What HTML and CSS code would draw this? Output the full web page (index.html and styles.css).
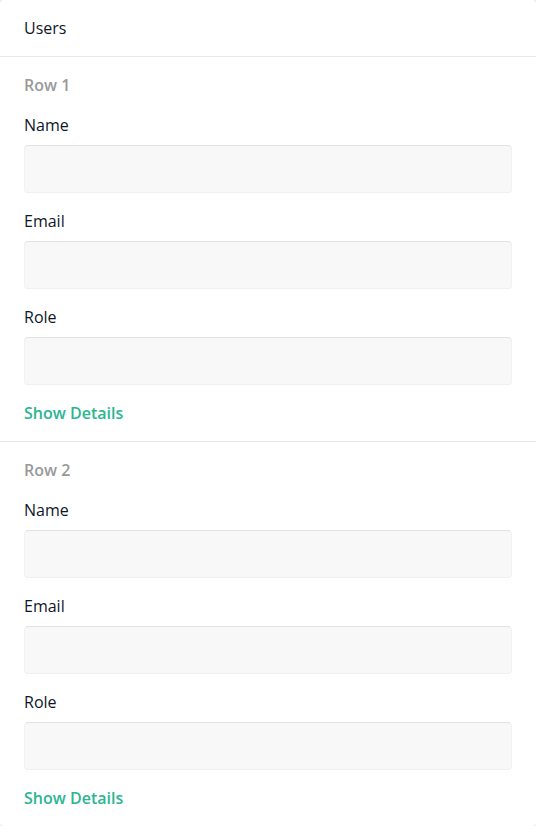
FILE: index.html
```html
<!DOCTYPE html>
<html lang="en">
<head>
<meta charset="utf-8">
<title>Users</title>
<link rel="stylesheet" href="styles.css">
</head>
<body>
<div class="card">
  <div class="card-header">Users</div>
  <section class="row">
    <div class="row-title">Row 1</div>
    <div class="fields">
      <div class="field">
        <label class="label">Name</label>
        <div class="input"></div>
      </div>
      <div class="field">
        <label class="label">Email</label>
        <div class="input"></div>
      </div>
      <div class="field">
        <label class="label">Role</label>
        <div class="input"></div>
      </div>
    </div>
    <a class="link">Show Details</a>
  </section>
  <section class="row">
    <div class="row-title">Row 2</div>
    <div class="fields">
      <div class="field">
        <label class="label">Name</label>
        <div class="input"></div>
      </div>
      <div class="field">
        <label class="label">Email</label>
        <div class="input"></div>
      </div>
      <div class="field">
        <label class="label">Role</label>
        <div class="input"></div>
      </div>
    </div>
    <a class="link">Show Details</a>
  </section>
</div>
</body>
</html>
```
FILE: styles.css
```css
* { box-sizing: border-box; }
html, body {
  margin: 0;
  padding: 0;
  background: #f4f4f4;
}
body {
  font-family: "Open Sans", "Noto Sans", sans-serif;
  font-size: 16px;
  line-height: 24px;
  color: #0f1629;
}
.card {
  background: #fff;
  height: 826px;
  border-radius: 4px;
  box-shadow: 0 0 2px rgba(0, 0, 0, 0.12);
  overflow: hidden;
}
.card-header {
  height: 57px;
  padding: 16px 24px;
  font-weight: 500;
  border-bottom: 1px solid #e8e8e8;
}
.row {
  padding: 16px 24px;
  display: flex;
  flex-direction: column;
  gap: 16px;
  border-bottom: 1px solid #e8e8e8;
}
.row:last-child { border-bottom: none; }
.row-title {
  color: #999;
  font-weight: 600;
}
.fields {
  display: flex;
  flex-direction: column;
  gap: 16px;
}
.field {
  display: flex;
  flex-direction: column;
  gap: 8px;
}
.label {
  font-weight: 500;
}
.input {
  height: 48px;
  background: #f8f8f8;
  border: 1px solid #f1f1f1;
  border-top-color: #e3e3e3;
  border-radius: 4px;
}
.link {
  color: #2bb592;
  font-weight: 600;
  cursor: pointer;
}
```
